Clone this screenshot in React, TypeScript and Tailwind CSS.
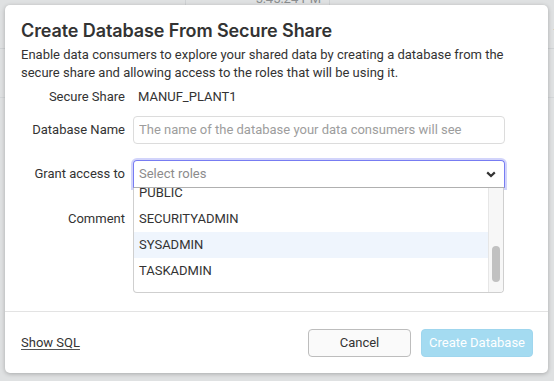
const roles = ["PUBLIC", "SECURITYADMIN", "SYSADMIN", "TASKADMIN"];

function Backdrop() {
  return (
    <div className="absolute inset-0 bg-[#dfe1e2] text-[#8a8d8f] text-[13px]">
      <div className="flex h-[49px] border-b border-[#cfd2d4]">
        <div className="w-[186px] border-r border-[#cfd2d4]" />
        <div className="w-[144px] border-r border-[#cfd2d4] flex justify-end">
          <span className="-mt-[9px] mr-[8px] leading-4">5:45:24 PM</span>
        </div>
        <div className="flex-1 flex justify-end items-center pt-[16px]">
          <span className="-mr-[4px]">f</span>
        </div>
      </div>
      <div className="h-[49px] border-b border-[#d3d6d8]" />
    </div>
  );
}

function Field({ label, children }: { label: string; children: React.ReactNode }) {
  return (
    <div className="flex items-center gap-2">
      <label className="w-[104px] shrink-0 text-right">{label}</label>
      <div className="w-[372px]">{children}</div>
    </div>
  );
}

export default function App() {
  return (
    <div className="relative w-[554px] h-[381px] overflow-hidden font-['Roboto',sans-serif] text-[#333]">
      <Backdrop />

      <div className="absolute left-[5px] top-[5px] w-[543px] h-[368px] bg-white rounded-[5px] shadow-[0_1px_4px_rgba(0,0,0,0.25)] flex flex-col">
        <div className="flex-1 px-4 pt-[14px]">
          <h2 className="font-['Inter',sans-serif] text-[18px] leading-6 font-semibold tracking-[-0.1px]">
            Create Database From Secure Share
          </h2>
          <p className="mt-[3px] text-[13px] leading-[18px]">
            Enable data consumers to explore your shared data by creating a database from the secure share and allowing
            access to the roles that will be using it.
          </p>

          <div className="mt-[5px] text-[13px] flex flex-col">
            <Field label="Secure Share">
              <div className="leading-[18px] pl-[5px]">MANUF_PLANT1</div>
            </Field>

            <div className="mt-[9px]">
              <Field label="Database Name">
                <input
                  className="w-full h-[28px] px-[5px] border border-[#dcdcdc] rounded-[4px] text-[13px] placeholder:text-[#9d9d9d] outline-none"
                  placeholder="The name of the database your data consumers will see"
                />
              </Field>
            </div>

            <div className="mt-[16px] relative">
              <Field label="Grant access to">
                <div className="relative">
                  <div className="h-[28px] flex items-center justify-between pl-[5px] pr-[8px] border border-[#777cf2] border-b-[#b0b0b0] rounded-t-[4px] shadow-[0_0_0_2px_#d2d4fb]">
                    <span className="text-[#8c8c8c]">Select roles</span>
                    <svg width="10" height="7" viewBox="0 0 10 7" className="mt-[1px]">
                      <path d="M1.2 1.4 L5 5 L8.8 1.4" fill="none" stroke="#333" strokeWidth="2.2" />
                    </svg>
                  </div>
                  <div className="absolute left-0 top-[28px] w-[371px] h-[105px] bg-white border border-t-0 border-[#cfcfcf] rounded-b-[4px] overflow-hidden flex z-10">
                    <div className="flex-1 overflow-hidden">
                      <div className="-mt-[8px]">
                        {roles.map((r) => (
                          <div
                            key={r}
                            className={`h-[26px] flex items-center pl-[5px] ${r === "SYSADMIN" ? "bg-[#eff5fd]" : ""}`}
                          >
                            {r}
                          </div>
                        ))}
                      </div>
                    </div>
                    <div className="w-[15px] bg-[#f7f7f7] border-l border-[#e6e6e6] relative">
                      <div className="absolute left-[3px] top-[58px] w-[8px] h-[36px] rounded-full bg-[#c1c1c1]" />
                    </div>
                  </div>
                </div>
              </Field>
            </div>

            <div className="mt-[16px]">
              <div className="flex gap-2">
                <label className="w-[104px] shrink-0 text-right leading-[18px] pt-[6px]">Comment</label>
                <div className="w-[371px] h-[64px] border border-[#dcdcdc] rounded-[4px]" />
              </div>
            </div>
          </div>
        </div>

        <div className="h-[62px] border-t border-[#e3e3e3] flex items-center justify-between pl-4 pr-[15px] text-[13px]">
          <a href="#" className="underline underline-offset-2 decoration-[#555]">
            Show SQL
          </a>
          <div className="flex gap-[10px]">
            <button className="w-[103px] h-[28px] rounded-[4px] border border-[#bdbdbd] bg-[#fafafa] text-[#333]">
              Cancel
            </button>
            <button className="w-[112px] h-[28px] rounded-[4px] border border-[#9fd6ee] bg-[#a4dbf1] text-white">
              Create Database
            </button>
          </div>
        </div>
      </div>
    </div>
  );
}
